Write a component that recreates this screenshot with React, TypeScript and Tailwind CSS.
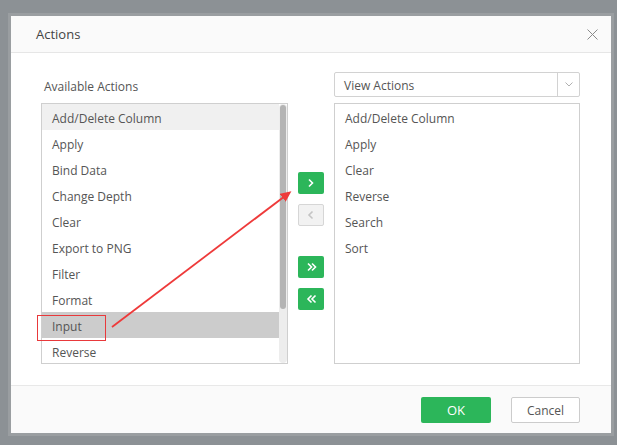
import { useState } from 'react';

const available = [
  'Add/Delete Column',
  'Apply',
  'Bind Data',
  'Change Depth',
  'Clear',
  'Export to PNG',
  'Filter',
  'Format',
  'Input',
  'Reverse',
];

const chosen = ['Add/Delete Column', 'Apply', 'Clear', 'Reverse', 'Search', 'Sort'];

function Chevron({ dir, double, color }: { dir: 'left' | 'right'; double?: boolean; color: string }) {
  const d = dir === 'right' ? 'M2 1.5 L5.5 5 L2 8.5' : 'M5.5 1.5 L2 5 L5.5 8.5';
  return (
    <svg width={double ? 11 : 8} height="10" viewBox={double ? '0 0 11 10' : '0 0 8 10'} fill="none">
      <path d={d} stroke={color} strokeWidth="1.6" />
      {double && <path d={d} transform="translate(4 0)" stroke={color} strokeWidth="1.6" />}
    </svg>
  );
}

function MoveButton({ dir, double, disabled }: { dir: 'left' | 'right'; double?: boolean; disabled?: boolean }) {
  return (
    <button
      className={
        disabled
          ? 'w-[26px] h-[22px] flex items-center justify-center rounded-[2px] border border-[#d6d6d6] bg-[#f2f2f2]'
          : 'w-[26px] h-[22px] flex items-center justify-center rounded-[2px] bg-[#2cb65a]'
      }
    >
      <Chevron dir={dir} double={double} color={disabled ? '#c4c4c4' : '#ffffff'} />
    </button>
  );
}

export default function App() {
  const [selected] = useState('Input');

  return (
    <div
      className="relative w-[617px] h-[445px] bg-[#8c9195] pt-[16px] pl-[11px] overflow-hidden"
      style={{ fontFamily: '"Open Sans", "Liberation Sans", sans-serif' }}
    >
      <div className="w-[600px] h-[417px] bg-white flex flex-col shadow-[0_0_0_3px_rgba(255,255,255,0.12)]">
        {/* header */}
        <div className="h-[37px] shrink-0 flex items-center justify-between bg-[#fafafa] border-b border-[#e6e6e6] pl-[25px] pr-[13px]">
          <span className="text-[13px] text-[#444] pt-[2px]">Actions</span>
          <svg width="11" height="11" viewBox="0 0 11 11">
            <path d="M0.5 0.5 L10.5 10.5 M10.5 0.5 L0.5 10.5" stroke="#8a8a8a" strokeWidth="1" />
          </svg>
        </div>

        {/* body */}
        <div className="flex-1 pt-[19px] pl-[30px] pr-[31px] flex gap-[10px]">
          <div className="w-[247px] flex flex-col">
            <div className="h-[31px] flex items-center pl-[3px] pb-[2px] text-[12px] text-[#555]">Available Actions</div>
            <div className="h-[261px] border border-[#cfcfcf] flex text-[12px] text-[#555]">
              <div className="flex-1 overflow-hidden">
                {available.map((a, i) => (
                  <div
                    key={a}
                    className={
                      'h-[26px] shrink-0 flex items-center pl-[10px] pt-[3px] ' +
                      (a === selected ? 'bg-[#cccccc]' : i === 0 ? 'bg-[#f0f0f0]' : '')
                    }
                  >
                    {a}
                  </div>
                ))}
              </div>
              <div className="w-[8px] bg-[#ededed] rounded-full flex flex-col">
                <div className="h-[204px] mt-[1px] mx-[1px] rounded-full bg-[#b4b4b4]" />
              </div>
            </div>
          </div>

          <div className="w-[26px] flex flex-col pt-[100px]">
            <MoveButton dir="right" />
            <div className="h-[10px]" />
            <MoveButton dir="left" disabled />
            <div className="h-[30px]" />
            <MoveButton dir="right" double />
            <div className="h-[10px]" />
            <MoveButton dir="left" double />
          </div>

          <div className="w-[246px] flex flex-col">
            <div className="h-[25px] border border-[#d2d2d2] rounded-[2px] flex text-[12px] text-[#555]">
              <div className="flex-1 flex items-center pl-[9px] pt-[2px]">View Actions</div>
              <div className="w-[22px] border-l border-[#d2d2d2] flex items-center justify-center">
                <svg width="8" height="5" viewBox="0 0 8 5" fill="none">
                  <path d="M0.5 0.5 L4 4 L7.5 0.5" stroke="#b0b0b0" strokeWidth="1" />
                </svg>
              </div>
            </div>
            <div className="h-[6px]" />
            <div className="h-[261px] border border-[#cfcfcf] text-[12px] text-[#555]">
              {chosen.map((a) => (
                <div key={a} className="h-[26px] flex items-center pl-[10px] pt-[3px]">
                  {a}
                </div>
              ))}
            </div>
          </div>
        </div>

        {/* footer */}
        <div className="h-[48px] shrink-0 bg-[#fafafa] border-t border-[#e8e8e8] flex justify-end items-start pt-[11px] pr-[31px] gap-[20px]">
          <button className="w-[70px] h-[26px] pt-[1px] rounded-[2px] bg-[#2cb65a] text-white text-[13px]">OK</button>
          <button className="w-[69px] h-[26px] pt-[1px] rounded-[2px] bg-white border border-[#cccccc] text-[#555] text-[12px]">
            Cancel
          </button>
        </div>
      </div>

      {/* red annotation */}
      <div className="absolute left-[37px] top-[315px] w-[69px] h-[26px] border border-[#e8393b]" />
      <svg className="absolute left-0 top-0 pointer-events-none" width="617" height="445">
        <defs>
          <marker id="ah" markerWidth="11" markerHeight="10" refX="8" refY="5" orient="auto" markerUnits="userSpaceOnUse">
            <path d="M0 0 L11 5 L0 10 Z" fill="#ee3a3a" />
          </marker>
        </defs>
        <line x1="112" y1="327" x2="289" y2="193" stroke="#ee3a3a" strokeWidth="1.8" markerEnd="url(#ah)" />
      </svg>
    </div>
  );
}
